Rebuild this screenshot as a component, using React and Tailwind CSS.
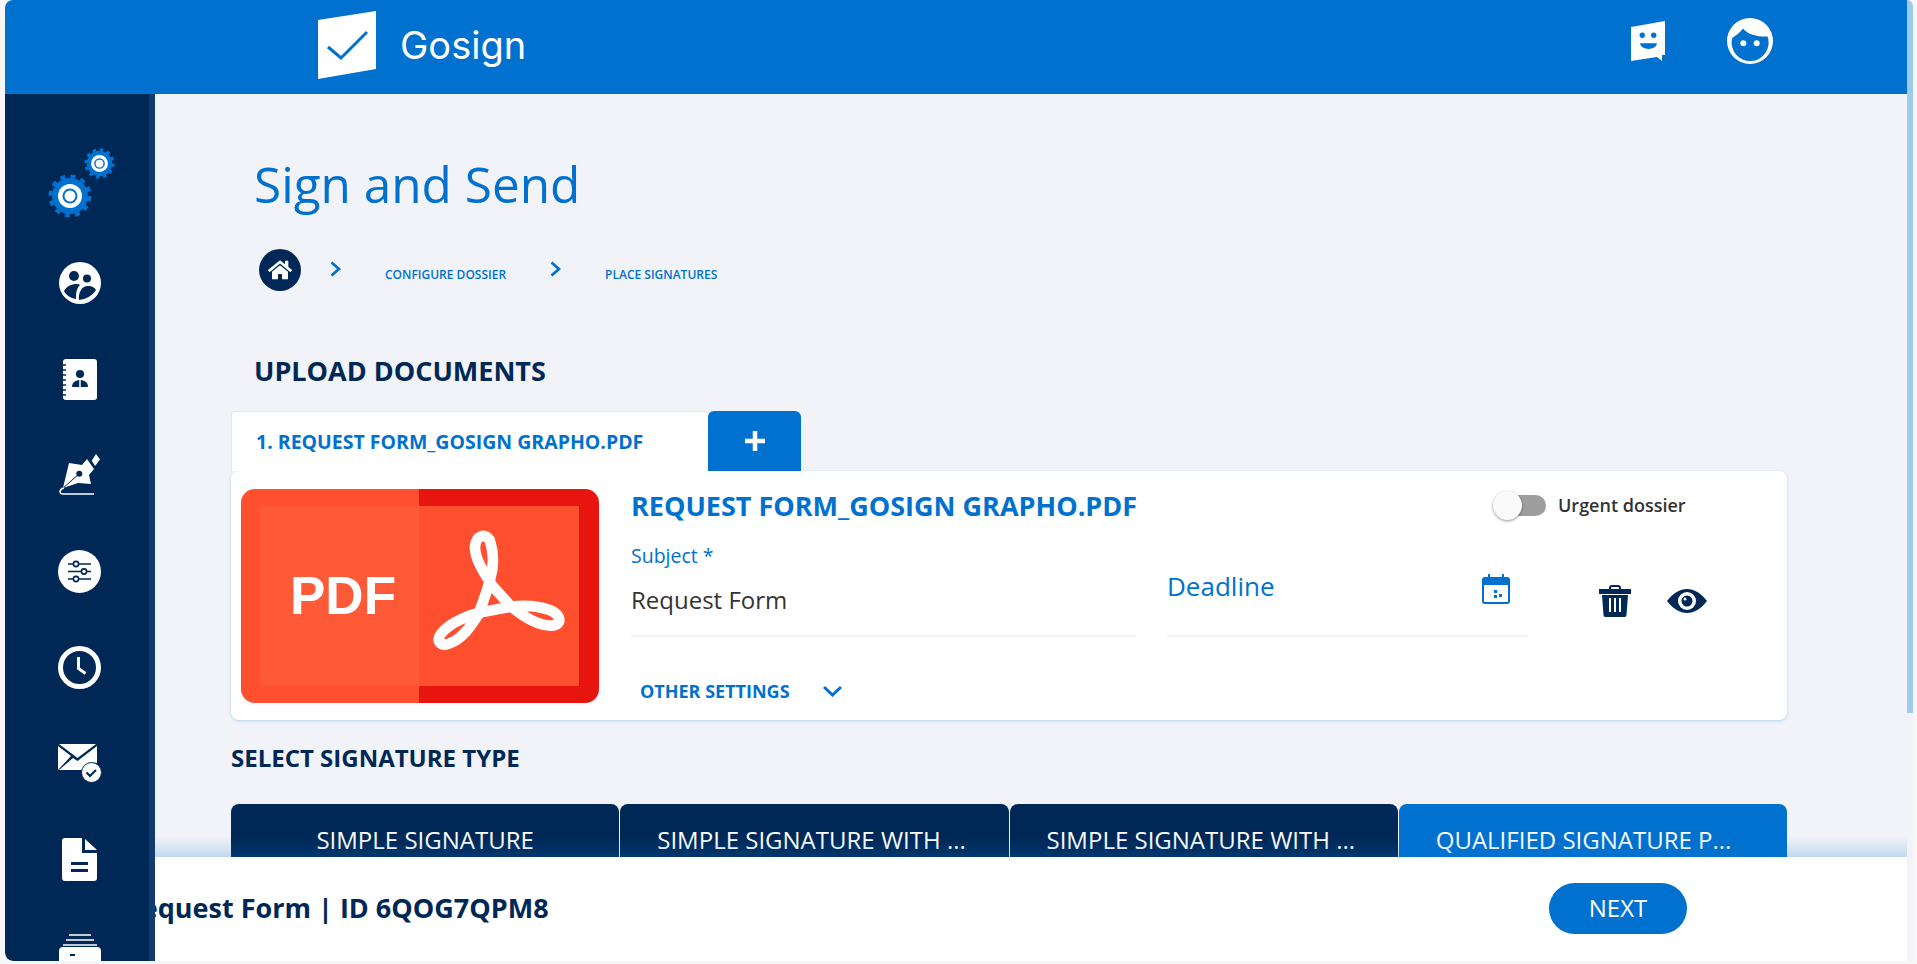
import React from "react";
import { FaHome } from "react-icons/fa";

const Gear = ({ size }) => (
 <svg width={size} height={size} viewBox="0 0 44 44">
  <circle cx="22" cy="22" r="18" fill="#0071ce" />
  <circle
   cx="22"
   cy="22"
   r="19.5"
   fill="none"
   stroke="#0071ce"
   strokeWidth="4"
   strokeDasharray="5 5.2"
  />
  <circle cx="22" cy="22" r="12" fill="#fff" />
  <circle cx="22" cy="22" r="7.5" fill="#0071ce" />
  <circle cx="22" cy="22" r="5.5" fill="#fff" />
 </svg>
);

const PeopleIcon = () => (
 <svg width="42" height="42" viewBox="-21 -21 42 42">
  <circle r="21" fill="#fff" />
  <circle cx="-6" cy="-7" r="5" fill="#002856" />
  <circle cx="7" cy="-4.5" r="4" fill="#002856" />
  <path d="M-16 8C-12 1-3 0 0 2C-4 6-4 11-4 16C-10 15-14 12-16 8Z" fill="#002856" />
  <path d="M-1 17C-2 8 3 2 9 3C12 3 15 5 16 7C13 12 7 16-1 17Z" fill="#002856" />
 </svg>
);

const BookIcon = () => (
 <svg width="34" height="41" viewBox="0 0 34 41">
  <rect width="34" height="41" rx="3" fill="#fff" />
  <path d="M0 6h3M0 11h3M0 16h3M0 21h3M0 26h3M0 31h3M0 36h3" stroke="#002856" strokeWidth="1.5" />
  <circle cx="17" cy="15" r="4" fill="#002856" />
  <path d="M9 28c0-5 4-7 8-7s8 2 8 7z" fill="#002856" />
  <path d="M17 21v7" stroke="#fff" strokeWidth="1.5" />
 </svg>
);

const PenIcon = () => (
 <svg width="43" height="42" viewBox="0 0 43 42">
  <path d="M33.700 6.700 38 0l4 5.400-5 6.600z" fill="#fff" />
  <path d="M11 9 24 11 29 5 36 15 31 21 33 30 20 29 5 34z" fill="#fff" />
  <circle cx="21.300" cy="19.800" r="3" fill="#002856" />
  <path d="M5 34 21 20" stroke="#002856" strokeWidth="1" />
  <path d="M6 34C1 35 1 40 5 40H36" fill="none" stroke="#fff" strokeWidth="1.600" />
 </svg>
);

const SlidersIcon = () => (
 <svg width="43" height="43" viewBox="0 0 43 43">
  <circle cx="21.500" cy="21.500" r="21.500" fill="#fff" />
  <path d="M10 14h23M10 21.500h23M10 29h23" stroke="#002856" strokeWidth="1.600" />
  <circle cx="18" cy="14" r="2.600" fill="#fff" stroke="#002856" strokeWidth="1.600" />
  <circle cx="26" cy="21.500" r="2.600" fill="#fff" stroke="#002856" strokeWidth="1.600" />
  <circle cx="18" cy="29" r="2.600" fill="#fff" stroke="#002856" strokeWidth="1.600" />
 </svg>
);

const ClockIcon = () => (
 <svg width="43" height="43" viewBox="0 0 43 43">
  <circle cx="21.500" cy="21.500" r="19" fill="none" stroke="#fff" strokeWidth="5" />
  <path d="M20.500 11v11.500l7 5" fill="none" stroke="#fff" strokeWidth="3" />
 </svg>
);

const MailIcon = () => (
 <svg width="44" height="39" viewBox="0 0 44 39">
  <path d="M1 0h37L19.500 14z" fill="#fff" />
  <path d="M0 2 13 12 0 26z" fill="#fff" />
  <path d="M39 2v17c-6-1-11 1-14 7H1l14-12 4.500 3z" fill="#fff" />
  <circle cx="33.500" cy="28.500" r="10" fill="#fff" stroke="#002856" strokeWidth="1" />
  <path d="M28.500 28.500l3.500 3.500 6-6" fill="none" stroke="#002856" strokeWidth="2" />
 </svg>
);

const DocIcon = () => (
 <svg width="35" height="43" viewBox="0 0 35 43">
  <path d="M3 0h17v15h15v25a3 3 0 0 1-3 3H3a3 3 0 0 1-3-3V3a3 3 0 0 1 3-3z" fill="#fff" />
  <path d="M23 1l12 11H23z" fill="#fff" />
  <path d="M9 24h17v3H9zM9 31h17v3H9z" fill="#002856" />
 </svg>
);

const ArchiveIcon = () => (
 <svg width="42" height="42" viewBox="0 0 42 42">
  <path d="M10 1h22M7 6h28M4 11h34" stroke="#fff" strokeWidth="1.600" />
  <rect y="13" width="42" height="29" rx="4" fill="#fff" />
  <path d="M11 21h5" stroke="#002856" strokeWidth="2" />
 </svg>
);

const LogoMark = () => (
 <svg width="58" height="68" viewBox="0 0 58 68">
  <path d="M0 9 58 0v58L0 68z" fill="#fff" />
  <path d="M10 36l13 11 26-26" fill="none" stroke="#0071ce" strokeWidth="3" />
 </svg>
);

const ChatIcon = () => (
 <svg width="34" height="40" viewBox="0 0 34 40">
  <path d="M0 6 34 0v34h-3v6l-5-4L0 40z" fill="#fff" />
  <circle cx="11.300" cy="14.300" r="2.700" fill="#0071ce" />
  <circle cx="22.700" cy="14.300" r="2.700" fill="#0071ce" />
  <path d="M9 22.300h17c-1 7.500-16 7.500-17 0z" fill="#0071ce" />
 </svg>
);

const FaceIcon = () => (
 <svg width="46" height="46" viewBox="0 0 46 46">
  <circle cx="23" cy="23" r="23" fill="#fff" />
  <path
   d="M5.200 20C8 18 13 15 16 10.500 21 17 32 19 40.600 18.500A18.500 18.500 0 1 1 5.200 20Z"
   fill="#0071ce"
  />
  <circle cx="16.300" cy="25.300" r="3" fill="#fff" />
  <circle cx="29.700" cy="25.300" r="3" fill="#fff" />
 </svg>
);

const Chevron = () => (
 <svg width="11" height="16" viewBox="0 0 11 16">
  <path d="M1.500 1.500 9 8l-7.500 6.500" fill="none" stroke="#0071ce" strokeWidth="2.800" />
 </svg>
);

const PdfTile = () => (
 <div className="flex h-[214px] w-[358px] shrink-0 overflow-hidden rounded-[14px]">
  <div className="w-[178px] bg-[#ff4f2e] py-[17px] pl-[19px]">
   <div className="flex h-full items-center bg-[#ff5a38] pl-[30px]">
    <span className="font-['Liberation_Sans'] text-[53px] font-bold text-white">PDF</span>
   </div>
  </div>
  <div className="w-[180px] bg-[#e8150f] py-[17px] pr-[20px]">
   <div className="flex h-full items-center bg-[#ff4f2e] pb-[10px] pl-[14px]">
    <svg width="134" height="122" viewBox="640 395 402 366">
     <path
      d="M810 548C822 510 825 470 810 425 795 405 770 410 766 445 765 480 790 520 820 565L875 625C905 650 950 682 995 682 1030 680 1025 650 990 635 955 622 915 620 875 625L785 642C745 650 690 675 665 705 645 730 665 745 690 735 725 722 750 690 775 650 785 625 800 585 810 548Z"
      fill="none"
      stroke="#fff"
      strokeWidth="32"
     />
    </svg>
   </div>
  </div>
 </div>
);

// long labels sit at the left padding, the short one is centred
const SignatureTab = ({ label, active, long }) => (
 <div
  className={`flex h-[80px] rounded-t-[8px] pt-[18px] text-[24px] whitespace-nowrap text-white ${
   long ? "justify-start pl-[37px]" : "justify-center"
  } ${active ? "bg-[#0071ce]" : "bg-[#002856]"}`}
 >
  {label}
 </div>
);

export default function App() {
 const sideIcons = [
  <PeopleIcon />,
  <BookIcon />,
  <PenIcon />,
  <SlidersIcon />,
  <ClockIcon />,
  <MailIcon />,
  <DocIcon />,
  <ArchiveIcon />,
 ];

 return (
  <div className="flex h-screen w-full overflow-hidden bg-[#f7f7f7] pr-[4px] pb-[3px] pl-[5px] font-['Open_Sans',sans-serif]">
   <div className="flex min-w-0 flex-1 flex-col overflow-hidden rounded-tl-[8px] rounded-bl-[8px] bg-white">
    <header className="flex h-[94px] shrink-0 items-center bg-[#0071ce] pr-[134px] pl-[313px]">
     <div className="mb-[4px] flex items-center">
      <LogoMark />
      <span className="ml-[24px] font-['Inter',sans-serif] text-[38px] text-white">Gosign</span>
     </div>
     <div className="mb-[12px] ml-auto flex items-center gap-[62px]">
      <ChatIcon />
      <FaceIcon />
     </div>
    </header>

    <div className="flex min-h-0 flex-1">
     <aside className="w-[150px] shrink-0 overflow-hidden rounded-bl-[8px] border-r-[6px] border-[#0f3e6e] bg-[#002856]">
      <div className="relative h-[141px]">
       <div className="absolute top-[80px] left-[43px]">
        <Gear size={44} />
       </div>
       <div className="absolute top-[54px] left-[79px]">
        <Gear size={31} />
       </div>
      </div>
      {sideIcons.map((icon, index) => (
       <div key={index} className="flex h-[96px] items-center justify-center pl-[5px]">
        {icon}
       </div>
      ))}
     </aside>

     <main className="relative min-w-0 flex-1 overflow-hidden bg-[#f1f3f8] pr-[120px] pl-[76px]">
      <h1 className="mt-[54px] ml-[23px] text-[49.500px] leading-[72px] font-medium text-[#0071ce]">Sign and Send</h1>

      <nav className="mt-[29px] ml-[28px] flex h-[42px] items-center text-[12px] font-semibold text-[#0071ce]">
       <span className="flex h-[42px] w-[42px] items-center justify-center rounded-full bg-[#002856] text-[24px] text-white">
        <FaHome />
       </span>
       <span className="mb-[2px] ml-[29px]">
        <Chevron />
       </span>
       <span className="mt-[9px] ml-[44px]">CONFIGURE DOSSIER</span>
       <span className="mb-[2px] ml-[44px]">
        <Chevron />
       </span>
       <span className="mt-[9px] ml-[44px]">PLACE SIGNATURES</span>
      </nav>

      <h2 className="mt-[63px] ml-[23px] text-[27px] leading-[34px] font-bold text-[#002856]">UPLOAD DOCUMENTS</h2>

      <div className="mt-[23px] flex h-[60px]">
       <div className="flex w-[477px] items-center rounded-t-[4px] border-t border-l border-[#e4e8ef] bg-white pl-[24px] text-[19.500px] font-bold text-[#0071ce]">
        1. REQUEST FORM_GOSIGN GRAPHO.PDF
       </div>
       <div className="flex w-[93px] items-center justify-center rounded-t-[6px] bg-[#0071ce]">
        <svg width="24" height="24" viewBox="0 0 24 24">
         <path d="M12 2v20M2 12h20" stroke="#fff" strokeWidth="4.500" />
        </svg>
       </div>
      </div>

      <section className="flex h-[249px] rounded-[8px] bg-white pt-[18px] pl-[10px] shadow-[0_1px_3px_rgba(0,113,206,0.25)]">
       <PdfTile />
       <div className="ml-[32px] w-[505px] shrink-0">
        <div className="text-[27px] leading-[34px] font-bold whitespace-nowrap text-[#0071ce]">
         REQUEST FORM_GOSIGN GRAPHO.PDF
        </div>
        <div className="mt-[20px] text-[19.500px] leading-[26px] text-[#0071ce]">Subject *</div>
        <div className="mt-[14px] h-[54px] border-b-2 border-[#f1f3f8] text-[24px] leading-[34px] text-[#333]">
         Request Form
        </div>
        <div className="mt-[41px] flex items-center pl-[9px] text-[18px] leading-[26px] font-bold text-[#0071ce]">
         OTHER SETTINGS
         <svg className="ml-[32px]" width="21" height="12" viewBox="0 0 21 12">
          <path d="M2 2l8.500 8L19 2" fill="none" stroke="#0071ce" strokeWidth="3" />
         </svg>
        </div>
       </div>
       <div className="ml-[31px] w-[361px] shrink-0 pt-[61px]">
        <div className="flex h-[87px] items-start justify-between border-b-2 border-[#f1f3f8] pr-[18px]">
         <span className="mt-[19px] text-[26px] leading-[34px] text-[#0071ce]">Deadline</span>
         <svg className="mt-[24px]" width="28" height="30" viewBox="0 0 28 30">
          <path d="M7 0v6M21 0v6" stroke="#0071ce" strokeWidth="2" />
          <rect x="1" y="4" width="26" height="25" rx="2" fill="#fff" stroke="#0071ce" strokeWidth="2" />
          <path d="M1 4h26v7H1z" fill="#0071ce" />
          <path d="M12 16h3v3h-3zM17 20h3v3h-3zM12 21h3v3h-3z" fill="#0071ce" />
         </svg>
        </div>
       </div>
       <div className="relative flex-1">
        <div className="absolute top-[3px] left-[-28px] flex items-center whitespace-nowrap">
         <div className="relative h-[21px] w-[46px] rounded-full bg-[#9e9e9e]">
          <div className="absolute top-[-4px] left-[-7px] h-[29px] w-[29px] rounded-full bg-[#fafafa] shadow-[0_1px_3px_rgba(0,0,0,0.4)]" />
         </div>
         <span className="ml-[12px] text-[18px] font-semibold text-[#333]">Urgent dossier</span>
        </div>
        <div className="mt-[96px] ml-[71px] flex items-center gap-[36px]">
         <svg width="32" height="32" viewBox="0 0 32 32">
          <path d="M11 4V3a2 2 0 0 1 2-2h6a2 2 0 0 1 2 2v1" fill="none" stroke="#002856" strokeWidth="2" />
          <path d="M0 4h32v5H0z" fill="#002856" />
          <path d="M3 10h26l-1.500 20a2 2 0 0 1-2 2h-19a2 2 0 0 1-2-2z" fill="#002856" />
          <path d="M11 13v14M16 13v14M21 13v14" stroke="#fff" strokeWidth="2" />
         </svg>
         <svg width="40" height="24" viewBox="0 0 40 24">
          <path d="M0 12C6 4 13 0 20 0s14 4 20 12c-6 8-13 12-20 12S6 20 0 12z" fill="#002856" />
          <circle cx="20" cy="12" r="9" fill="#fff" />
          <circle cx="20" cy="12" r="5.500" fill="#002856" />
          <circle cx="18" cy="10" r="1.500" fill="#fff" />
         </svg>
        </div>
       </div>
      </section>

      <h3 className="mt-[23px] text-[24px] leading-[30px] font-bold text-[#002856]">SELECT SIGNATURE TYPE</h3>

      <div className="mt-[31px] grid grid-cols-4 gap-[1px]">
       <SignatureTab label="SIMPLE SIGNATURE" />
       <SignatureTab label="SIMPLE SIGNATURE WITH ..." long />
       <SignatureTab label="SIMPLE SIGNATURE WITH ..." long />
       <SignatureTab label="QUALIFIED SIGNATURE P..." long active />
      </div>

      <footer className="absolute right-0 bottom-0 left-0 flex h-[104px] items-center justify-between bg-white pr-[220px] pb-[2px]">
       <div className="absolute top-[-20px] right-0 left-0 h-[20px] bg-linear-to-b from-transparent to-[#0071ce]/20" />
       <span className="ml-[-31px] text-[27px] font-bold whitespace-nowrap text-[#002856]">
        Request Form | ID 6QOG7QPM8
       </span>
       <button className="h-[51px] w-[138px] rounded-full bg-[#0071ce] text-[24px] text-white">NEXT</button>
      </footer>
     </main>
    </div>
   </div>

   <div className="w-[6px] shrink-0 overflow-hidden rounded-tr-[10px] bg-[#f1f3f8]">
    <div className="h-[713px] bg-[#9ccbec]" />
   </div>
  </div>
 );
}
